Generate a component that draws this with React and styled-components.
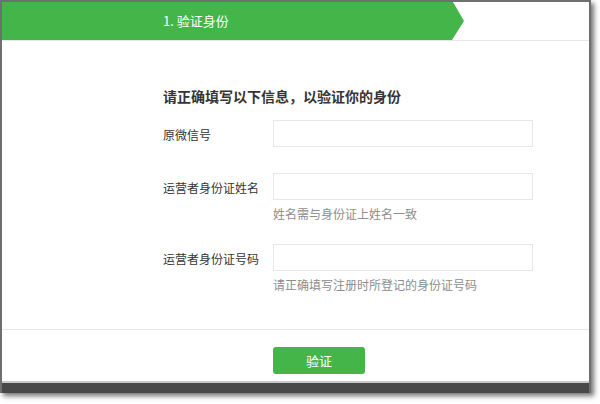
import React from "react";
import styled, { createGlobalStyle } from "styled-components";

const Global = createGlobalStyle`
  html, body {
    margin: 0;
    padding: 0;
    background: #ffffff;
  }
  body {
    font-family: "Noto Sans CJK SC", "Noto Sans", "Liberation Sans", sans-serif;
    -webkit-font-smoothing: antialiased;
  }
  * { box-sizing: border-box; }
`;

const Page = styled.div`
  width: 600px;
  height: 404px;
  overflow: hidden;
  background: #ffffff;
`;

const Window = styled.div`
  width: 591px;
  border-top: 2px solid #6f6f6f;
  border-left: 2px solid #6f6f6f;
  border-right: 2px solid #6f6f6f;
  background: #ffffff;
  box-shadow: 3px 3px 5px rgba(0, 0, 0, 0.55);
  display: flex;
  flex-direction: column;
`;

const Header = styled.div`
  height: 39px;
  border-bottom: 1px solid #e7e7eb;
  display: flex;
`;

const Step = styled.div`
  width: 462px;
  height: 38px;
  background: #44b549;
  clip-path: polygon(0 0, 451px 0, 462px 50%, 450px 100%, 0 100%);
  color: #ffffff;
  font-size: 13px;
  line-height: 38px;
  padding-left: 161px;
`;

const FormSection = styled.div`
  padding: 45px 0 36px 161px;
  border-bottom: 1px solid #e7e7eb;
`;

const Title = styled.h2`
  margin: 0 0 14px;
  font-size: 14px;
  line-height: 20px;
  font-weight: 700;
  color: #353535;
`;

const Row = styled.div`
  display: grid;
  grid-template-columns: 110px 260px;
  align-items: start;
  margin-bottom: ${(p) => p.$spacing}px;
`;

const Label = styled.label`
  font-size: 12px;
  line-height: 25px;
  padding-top: 2px;
  color: #353535;
  white-space: nowrap;
`;

const Field = styled.div`
  display: flex;
  flex-direction: column;
`;

const Input = styled.input`
  width: 260px;
  height: 27px;
  border: 1px solid #e7e7eb;
  border-radius: 0;
  padding: 0 8px;
  outline: none;
  background: #ffffff;
`;

const Hint = styled.div`
  margin-top: 5px;
  font-size: 12px;
  line-height: 17px;
  color: #8d8d8d;
  white-space: nowrap;
`;

const Footer = styled.div`
  padding: 17px 0 7px 271px;
`;

const Button = styled.button`
  width: 92px;
  height: 27px;
  border: none;
  border-radius: 3px;
  background: #44b549;
  color: #ffffff;
  font-family: inherit;
  font-size: 13px;
  cursor: pointer;
`;

const BottomBar = styled.div`
  height: 12px;
  border-top: 2px solid #c9c9c9;
  background: #494949;
`;

const fields = [
  { label: "原微信号", spacing: 26 },
  { label: "运营者身份证姓名", hint: "姓名需与身份证上姓名一致", spacing: 22 },
  { label: "运营者身份证号码", hint: "请正确填写注册时所登记的身份证号码", spacing: 0 },
];

export default function App() {
  return (
    <Page>
      <Global />
      <Window>
        <Header>
          <Step>1. 验证身份</Step>
        </Header>
        <FormSection>
          <Title>请正确填写以下信息，以验证你的身份</Title>
          {fields.map((f) => (
            <Row key={f.label} $spacing={f.spacing}>
              <Label>{f.label}</Label>
              <Field>
                <Input type="text" />
                {f.hint && <Hint>{f.hint}</Hint>}
              </Field>
            </Row>
          ))}
        </FormSection>
        <Footer>
          <Button>验证</Button>
        </Footer>
        <BottomBar />
      </Window>
    </Page>
  );
}
